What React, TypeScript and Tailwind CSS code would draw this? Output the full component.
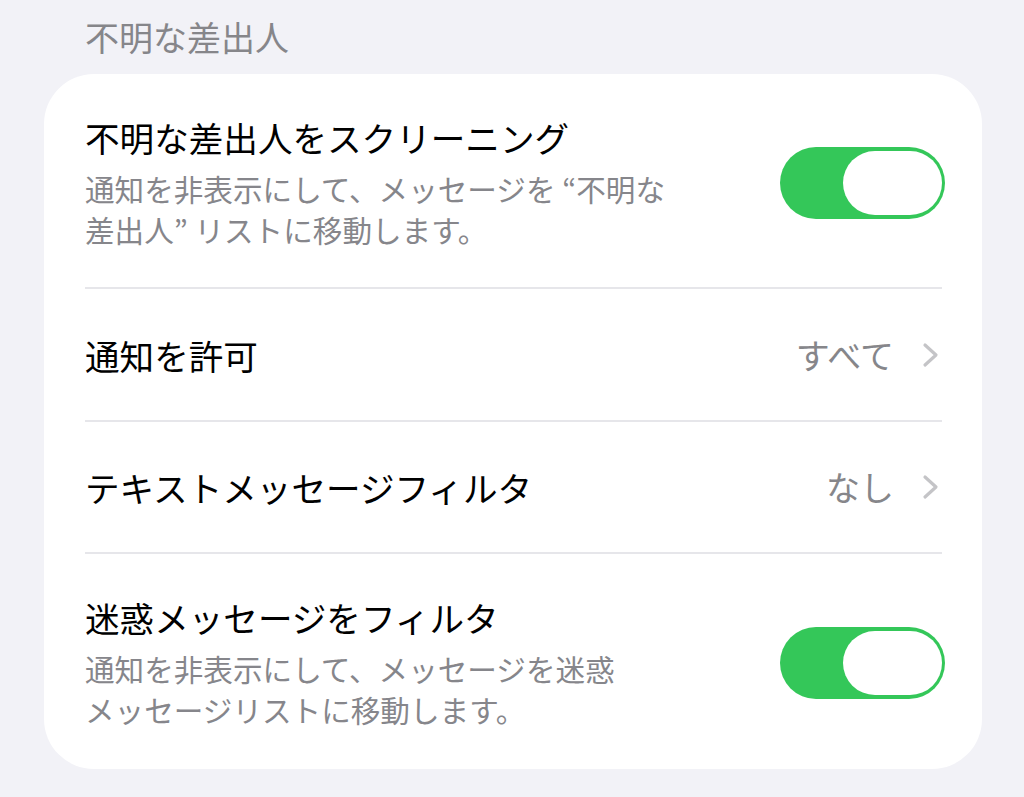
import React from 'react';

const Toggle = () => (
    <div className="flex h-[72px] w-[165px] shrink-0 items-center justify-end rounded-full bg-[#34c759] pr-[3px]">
        <div className="h-[64px] w-[99px] rounded-full bg-white" />
    </div>
);

const Chevron = () => (
    <svg width="17" height="26" viewBox="0 0 17 26" fill="none" className="shrink-0">
        <polyline points="3,3 14,13 3,23" stroke="#c4c4c7" strokeWidth="3.2" strokeLinecap="round" strokeLinejoin="round" />
    </svg>
);

const Divider = () => <div className="ml-[41px] mr-[40px] h-[2px] bg-[#e6e6ea]" />;

export default function App() {
    return (
        <div className="min-h-[797px] bg-[#f2f2f7] pt-[17px] font-['Noto_Sans_CJK_JP','Noto_Sans',sans-serif]">
            <h2 className="pl-[85px] text-[34px] leading-[40px] text-[#86868a]">不明な差出人</h2>

            <div className="ml-[44px] mt-[17px] w-[938px] rounded-[50px] bg-white">
                <div className="flex items-center justify-between pb-[37px] pl-[41px] pr-[37px] pt-[41px]">
                    <div>
                        <p className="text-[34.6px] leading-[44px] text-black">不明な差出人をスクリーニング</p>
                        <p className="mt-[9px] text-[29.6px] leading-[41px] text-[#86868b]">
                            通知を非表示にして、メッセージを “不明な
                            <br />
                            差出人” リストに移動します。
                        </p>
                    </div>
                    <Toggle />
                </div>

                <Divider />

                <div className="flex h-[131px] items-center justify-between pl-[41px] pr-[43px]">
                    <p className="text-[34.6px] leading-[44px] text-black">通知を許可</p>
                    <div className="flex items-center gap-[28px]">
                        <span className="text-[34px] leading-[44px] text-[#86868a]">すべて</span>
                        <Chevron />
                    </div>
                </div>

                <Divider />

                <div className="flex h-[130px] items-center justify-between pl-[41px] pr-[43px]">
                    <p className="text-[34.6px] leading-[44px] text-black">テキストメッセージフィルタ</p>
                    <div className="flex items-center gap-[28px]">
                        <span className="text-[34px] leading-[44px] text-[#86868a]">なし</span>
                        <Chevron />
                    </div>
                </div>

                <Divider />

                <div className="flex items-center justify-between pb-[39px] pl-[41px] pr-[37px] pt-[41px]">
                    <div>
                        <p className="text-[34.6px] leading-[44px] text-black">迷惑メッセージをフィルタ</p>
                        <p className="mt-[9px] text-[29.6px] leading-[41px] text-[#86868b]">
                            通知を非表示にして、メッセージを迷惑
                            <br />
                            メッセージリストに移動します。
                        </p>
                    </div>
                    <Toggle />
                </div>
            </div>
        </div>
    );
}
